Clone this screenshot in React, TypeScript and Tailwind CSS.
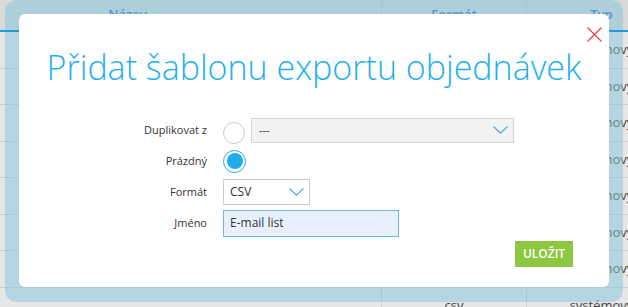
import { FC } from "react";

const rows = Array.from({ length: 8 }, (_, i) => i);

const Chevron: FC = () => (
  <svg width="15" height="8" viewBox="0 0 15 8" fill="none">
    <path d="M0.5 0.5 L7.5 7.2 L14.5 0.5" stroke="#45ace0" strokeWidth="1.1" />
  </svg>
);

const BackgroundTable: FC = () => (
  <div className="ml-[-126px] w-[802px] text-[13px] text-[#444]">
    <div className="grid h-[30px] grid-cols-[508px_145px_149px] bg-[#d9d9d9] font-semibold text-[#2a5cb8]">
      <div className="flex items-center justify-center border-r border-[#c6c6c6]">Název</div>
      <div className="flex items-center justify-center border-r border-[#c6c6c6]">Formát</div>
      <div className="flex items-center justify-center">Typ</div>
    </div>
    <div className="relative z-10 h-[2px] bg-[#1b9dd9]" />
    {rows.map((i) => (
      <div
        key={i}
        className="grid h-[36.5px] grid-cols-[508px_145px_149px] border-b border-[#cfcfcf]"
      >
        <div className="border-r border-[#cfcfcf]" />
        <div className="flex items-center justify-center border-r border-[#cfcfcf]">
          {i === 7 ? "csv" : ""}
        </div>
        <div className="flex items-center justify-center">systémový</div>
      </div>
    ))}
  </div>
);

const Label: FC<{ text: string }> = ({ text }) => (
  <span className="w-[188px] text-right text-[11px] text-[#333]">{text}</span>
);

export default function App() {
  return (
    <div className="relative h-[307px] w-[628px] overflow-hidden bg-[#e6e6e6] font-['Open_Sans',sans-serif]">
      <BackgroundTable />

      <div className="absolute left-[5px] top-0 z-[5] h-[302px] w-[618px] rounded-[12px] bg-[rgba(130,198,218,0.5)]" />

      <div className="absolute left-[19px] top-[14px] z-20 flex h-[273px] w-[590px] flex-col rounded-[6px] bg-white">
        <button className="absolute right-[7px] top-[13px] h-[15px] w-[15px]">
          <svg width="15" height="15" viewBox="0 0 15 15">
            <path d="M0.5 0.5 L14.5 14.5 M14.5 0.5 L0.5 14.5" stroke="#e8403a" strokeWidth="1.2" />
          </svg>
        </button>

        <h1 className="pt-[30px] text-center text-[34px] font-light leading-[46px] text-[#1fb1ee]">
          Přidat šablonu exportu objednávek
        </h1>

        <div className="mt-[27px] flex flex-col gap-[5px]">
          <div className="flex h-[26px] items-center">
            <Label text="Duplikovat z" />
            <span className="ml-[16px] mt-[6px] h-[22px] w-[22px] rounded-full border border-[#cccccc] bg-white" />
            <div className="ml-[6px] flex h-[25px] w-[263px] items-center justify-between border border-[#d6d6d6] bg-[#f2f2f2] pl-[7px] pr-[5px] text-[11px] text-[#333]">
              <span>---</span>
              <Chevron />
            </div>
          </div>

          <div className="flex h-[26px] items-center">
            <Label text="Prázdný" />
            <span className="ml-[16px] flex h-[23px] w-[23px] items-center justify-center rounded-full border border-[#2aa8e2] bg-white">
              <span className="h-[16px] w-[16px] rounded-full bg-[#1daeee]" />
            </span>
          </div>

          <div className="flex h-[26px] items-center">
            <Label text="Formát" />
            <div className="ml-[16px] flex h-[26px] w-[87px] items-center justify-between border border-[#cccccc] bg-white pl-[6px] pr-[5px] text-[12px] text-[#333]">
              <span>CSV</span>
              <Chevron />
            </div>
          </div>

          <div className="flex h-[26px] items-center">
            <Label text="Jméno" />
            <div className="ml-[16px] flex h-[27px] w-[176px] items-center border border-[#6db6e6] bg-[#e8f0fe] pl-[6px] text-[12px] text-[#333]">
              E-mail list
            </div>
          </div>
        </div>

        <div className="mt-[5px] flex justify-end pr-[36px]">
          <button className="flex h-[26px] w-[58px] items-center justify-center bg-[#8dc63f] text-[12px] font-semibold text-white">
            ULOŽIT
          </button>
        </div>
      </div>
    </div>
  );
}
